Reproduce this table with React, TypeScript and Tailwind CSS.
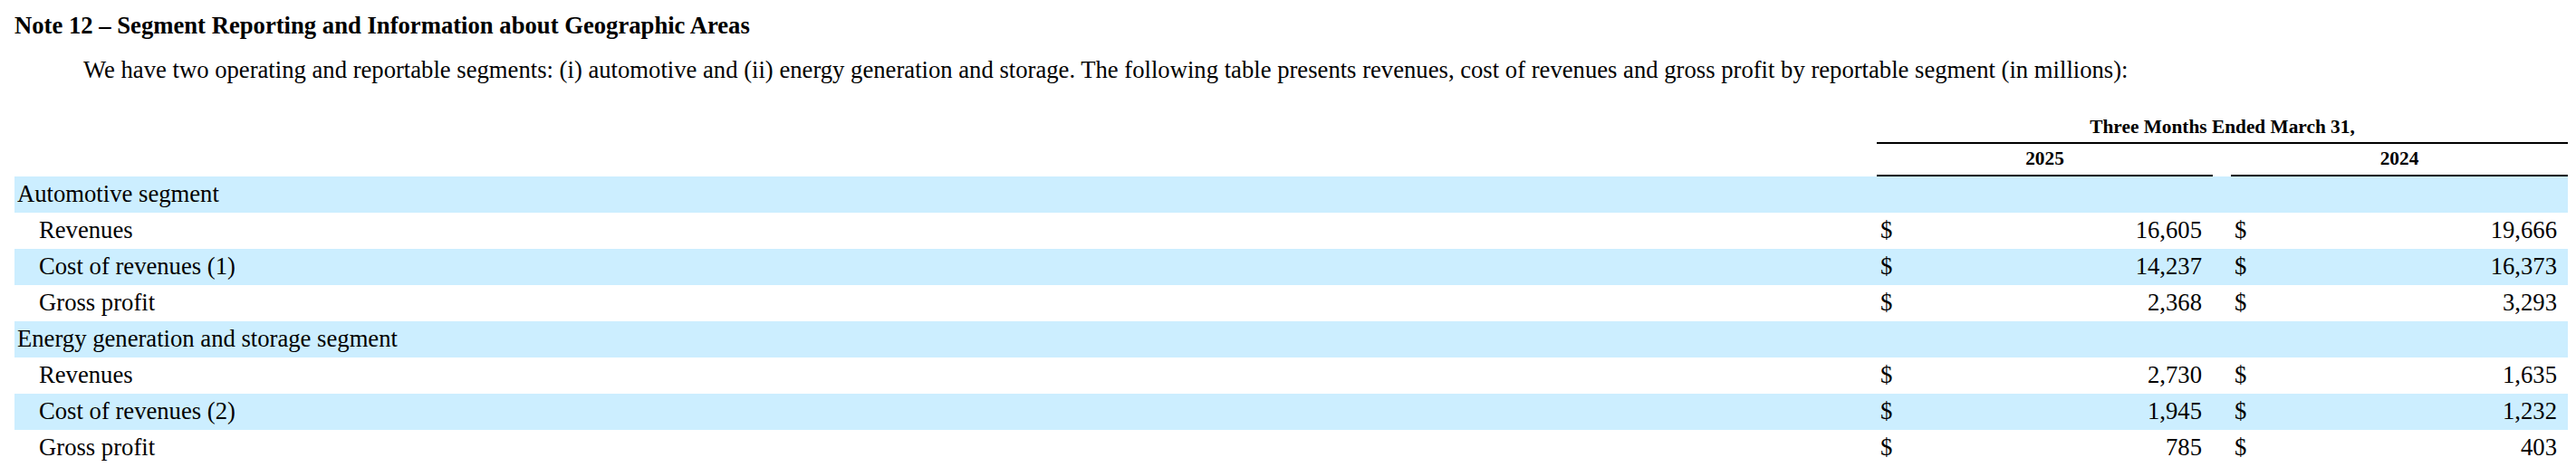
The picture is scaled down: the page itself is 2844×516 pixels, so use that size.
import React from "react";

type Row = { label: string; indent: boolean; a?: string; b?: string; shaded: boolean };

const rows: Row[] = [
  { label: "Automotive segment", indent: false, shaded: true },
  { label: "Revenues", indent: true, a: "16,605", b: "19,666", shaded: false },
  { label: "Cost of revenues (1)", indent: true, a: "14,237", b: "16,373", shaded: true },
  { label: "Gross profit", indent: true, a: "2,368", b: "3,293", shaded: false },
  { label: "Energy generation and storage segment", indent: false, shaded: true },
  { label: "Revenues", indent: true, a: "2,730", b: "1,635", shaded: false },
  { label: "Cost of revenues (2)", indent: true, a: "1,945", b: "1,232", shaded: true },
  { label: "Gross profit", indent: true, a: "785", b: "403", shaded: false },
];

function Amount({ v }: { v?: string }) {
  if (!v) return <div />;
  return (
    <div className="flex justify-between pl-[4px] pr-[12px]">
      <span>$</span>
      <span>{v}</span>
    </div>
  );
}

export default function App() {
  return (
    <div className="w-[2844px] h-[516px] overflow-hidden bg-white text-black font-['Liberation_Serif',serif] pl-[16px] pr-[9px]">
      <p className="pt-[13px] text-[26.67px] leading-[30px] font-bold">
        Note 12 – Segment Reporting and Information about Geographic Areas
      </p>
      <p className="mt-[19px] pl-[76px] text-[26.67px] leading-[30px]">
        We have two operating and reportable segments: (i) automotive and (ii) energy generation and storage. The following table presents revenues, cost of revenues and gross profit by reportable segment (in millions):
      </p>
      <div className="mt-[36px] grid grid-cols-[2056px_371px_20px_372px]">
        <div />
        <div className="col-span-3 border-b-2 border-black pb-[5px] text-center text-[21.33px] leading-[24px] font-bold">
          Three Months Ended March 31,
        </div>
        <div />
        <div className="border-b-2 border-black pt-[4px] pb-[6px] text-center text-[21.33px] leading-[24px] font-bold">
          2025
        </div>
        <div />
        <div className="border-b-2 border-black pt-[4px] pb-[6px] text-center text-[21.33px] leading-[24px] font-bold">
          2024
        </div>
      </div>
      <div className="flex flex-col">
        {rows.map((r, i) => (
          <div
            key={i}
            className={
              "grid h-[40px] grid-cols-[2056px_371px_20px_372px] pt-[4px] text-[26.67px] leading-[30px] " +
              (r.shaded ? "bg-[#cceeff]" : "bg-white")
            }
          >
            <div className={r.indent ? "pl-[27px]" : "pl-[3px]"}>{r.label}</div>
            <Amount v={r.a} />
            <div />
            <Amount v={r.b} />
          </div>
        ))}
      </div>
    </div>
  );
}
